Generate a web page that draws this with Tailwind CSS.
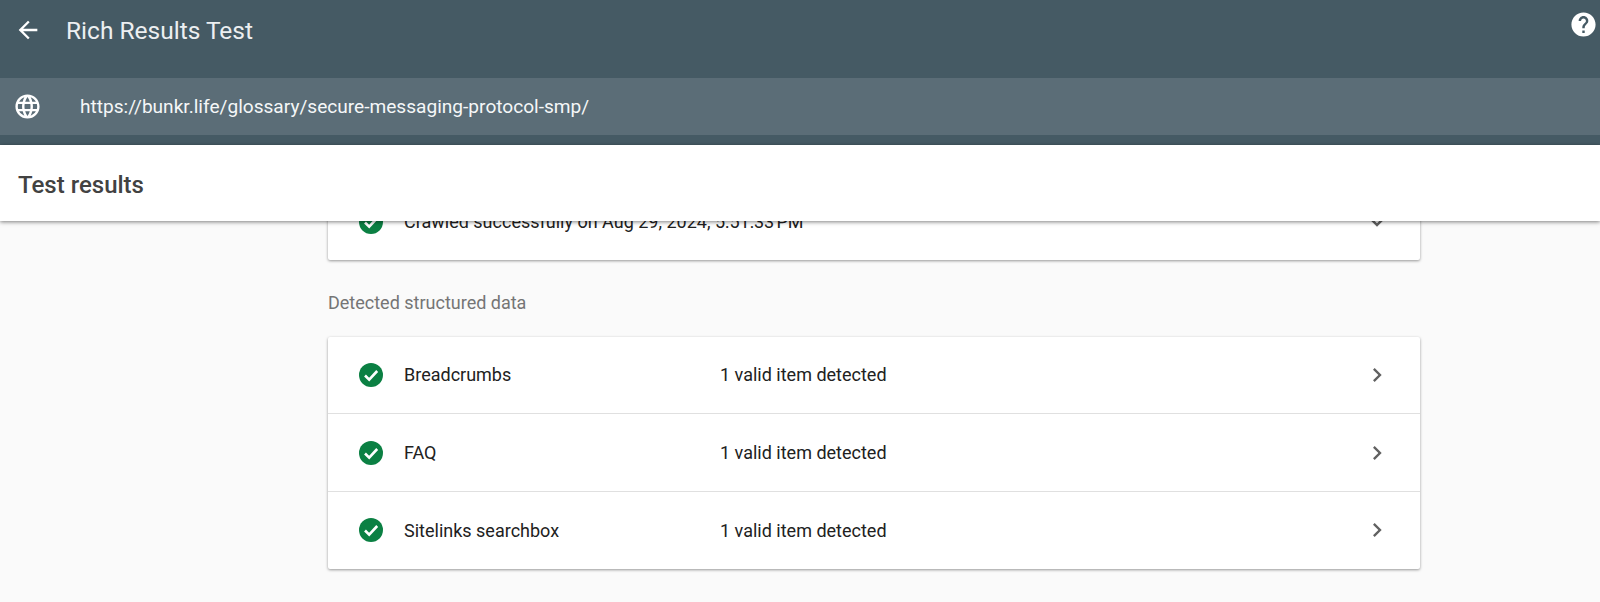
<!DOCTYPE html>
<html lang="en">
  <head>
    <meta charset="UTF-8" />
    <title>Rich Results Test</title>
    <script src="https://cdn.jsdelivr.net/npm/@tailwindcss/browser@4"></script>
  </head>
  <body class="bg-[#fafafa] h-[602px] overflow-hidden font-['Roboto',sans-serif]">
    <header class="bg-[#455a64]">
      <div class="h-[78px] pl-[14px] flex items-start">
        <svg class="w-[28px] h-[28px] mt-[16px]" viewBox="0 0 24 24" fill="#fff">
          <path d="M20 11H7.83l5.59-5.59L12 4l-8 8 8 8 1.41-1.41L7.83 13H20v-2z" />
        </svg>
        <h1 class="ml-[24px] mt-[16px] text-[24.5px] leading-[30px] text-[#eceff1]">Rich Results Test</h1>
        <svg class="ml-auto mr-[2px] mt-[10px] w-[29px] h-[29px]" viewBox="0 0 24 24" fill="#fff">
          <path d="M12 2C6.48 2 2 6.48 2 12s4.48 10 10 10 10-4.48 10-10S17.52 2 12 2zm1 17h-2v-2h2v2zm2.07-7.75l-.9.92C13.45 12.9 13 13.5 13 15h-2v-.5c0-1.1.45-2.1 1.17-2.83l1.24-1.26c.37-.36.59-.86.59-1.41 0-1.1-.9-2-2-2s-2 .9-2 2H8c0-2.21 1.79-4 4-4s4 1.79 4 4c0 .88-.36 1.68-.93 2.25z" />
        </svg>
      </div>
      <div class="h-[57px] bg-[#5b6d77] flex items-center pl-[13px]">
        <svg class="w-[29px] h-[29px]" viewBox="0 0 24 24" fill="#fff">
          <path d="M11.99 2C6.47 2 2 6.48 2 12s4.47 10 9.99 10C17.52 22 22 17.52 22 12S17.52 2 11.99 2zm6.93 6h-2.95c-.32-1.25-.78-2.45-1.38-3.56 1.84.63 3.37 1.91 4.33 3.56zM12 4.04c.83 1.2 1.48 2.53 1.91 3.96h-3.82c.43-1.43 1.08-2.76 1.91-3.96zM4.26 14C4.1 13.36 4 12.69 4 12s.1-1.36.26-2h3.38c-.08.66-.14 1.32-.14 2 0 .68.06 1.34.14 2H4.26zm.82 2h2.95c.32 1.25.78 2.45 1.38 3.56-1.84-.63-3.37-1.9-4.33-3.56zm2.95-8H5.08c.96-1.66 2.49-2.93 4.33-3.56C8.81 5.55 8.35 6.75 8.03 8zM12 19.96c-.83-1.2-1.48-2.53-1.91-3.96h3.82c-.43 1.43-1.08 2.76-1.91 3.96zM14.34 14H9.66c-.09-.66-.16-1.32-.16-2 0-.68.07-1.35.16-2h4.68c.09.65.16 1.32.16 2 0 .68-.07 1.34-.16 2zm.25 5.56c.6-1.11 1.06-2.31 1.38-3.56h2.95c-.96 1.65-2.49 2.93-4.33 3.56zM16.36 14c.08-.66.14-1.32.14-2 0-.68-.06-1.34-.14-2h3.38c.16.64.26 1.31.26 2s-.1 1.36-.26 2h-3.38z" />
        </svg>
        <span class="ml-[38px] pt-[2px] text-[19.1px] text-[#f5f7f8]">https://bunkr.life/glossary/secure-messaging-protocol-smp/</span>
      </div>
      <div class="h-[10px]"></div>
    </header>

    <div class="relative z-10 h-[76px] bg-white flex items-center pl-[18px] pt-[4px] shadow-[0_1px_4px_rgba(0,0,0,0.5)]">
      <h2 class="text-[24px] font-medium text-[#424242]">Test results</h2>
    </div>

    <main class="w-[1092px] ml-[328px] text-[18px] text-[#212121]">
      <section class="-mt-[38px] h-[77px] bg-white rounded-[2px] shadow-[0_1px_3px_rgba(0,0,0,0.4)] flex items-center pl-[29px] pr-[29px]">
        <svg class="w-[28px] h-[28px] shrink-0" viewBox="0 0 28 28">
          <circle cx="14" cy="14" r="12" fill="#0b8043" />
          <path d="M8 14.5l4.2 4.2 8-8.7" fill="none" stroke="#fff" stroke-width="2.6" />
        </svg>
        <span class="ml-[19px]">Crawled successfully on Aug 29, 2024, 5:51:33&#8239;PM</span>
        <svg class="ml-auto w-[28px] h-[28px]" viewBox="0 0 24 24" fill="#616161">
          <path d="M7.41 8.59 12 13.17l4.59-4.58L18 10l-6 6-6-6z" />
        </svg>
      </section>

      <p class="mt-[32px] text-[18px] leading-[22px] text-[#757575]">Detected structured data</p>

      <section class="mt-[23px] bg-white rounded-[2px] shadow-[0_1px_3px_rgba(0,0,0,0.4)] divide-y divide-[#e0e0e0]">
        <div class="h-[77px] flex items-center pl-[29px] pr-[29px] pb-[1px]">
          <svg class="w-[28px] h-[28px] shrink-0" viewBox="0 0 28 28">
            <circle cx="14" cy="14" r="12" fill="#0b8043" />
            <path d="M8 14.5l4.2 4.2 8-8.7" fill="none" stroke="#fff" stroke-width="2.6" />
          </svg>
          <span class="ml-[19px] w-[316px]">Breadcrumbs</span>
          <span>1 valid item detected</span>
          <svg class="ml-auto w-[28px] h-[28px]" viewBox="0 0 24 24" fill="#616161">
            <path d="M8.59 16.59 13.17 12 8.59 7.41 10 6l6 6-6 6z" />
          </svg>
        </div>
        <div class="h-[78px] flex items-center pl-[29px] pr-[29px]">
          <svg class="w-[28px] h-[28px] shrink-0" viewBox="0 0 28 28">
            <circle cx="14" cy="14" r="12" fill="#0b8043" />
            <path d="M8 14.5l4.2 4.2 8-8.7" fill="none" stroke="#fff" stroke-width="2.6" />
          </svg>
          <span class="ml-[19px] w-[316px]">FAQ</span>
          <span>1 valid item detected</span>
          <svg class="ml-auto w-[28px] h-[28px]" viewBox="0 0 24 24" fill="#616161">
            <path d="M8.59 16.59 13.17 12 8.59 7.41 10 6l6 6-6 6z" />
          </svg>
        </div>
        <div class="h-[77px] flex items-center pl-[29px] pr-[29px] pb-[1px]">
          <svg class="w-[28px] h-[28px] shrink-0" viewBox="0 0 28 28">
            <circle cx="14" cy="14" r="12" fill="#0b8043" />
            <path d="M8 14.5l4.2 4.2 8-8.7" fill="none" stroke="#fff" stroke-width="2.6" />
          </svg>
          <span class="ml-[19px] w-[316px]">Sitelinks searchbox</span>
          <span>1 valid item detected</span>
          <svg class="ml-auto w-[28px] h-[28px]" viewBox="0 0 24 24" fill="#616161">
            <path d="M8.59 16.59 13.17 12 8.59 7.41 10 6l6 6-6 6z" />
          </svg>
        </div>
      </section>
    </main>
  </body>
</html>
